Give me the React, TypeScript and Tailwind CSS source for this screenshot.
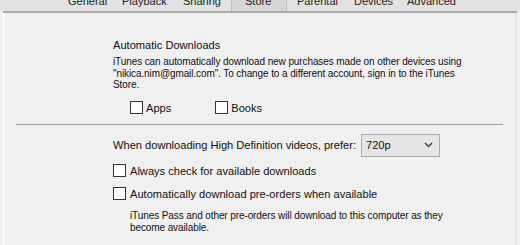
import React from "react";

function Box() {
  return <div className="w-[13px] h-[13px] border border-[#333333] bg-white shrink-0" />;
}

export default function App() {
  const tabs = [
    { t: "General", x: 68 },
    { t: "Playback", x: 122 },
    { t: "Sharing", x: 183 },
    { t: "Store", x: 245 },
    { t: "Parental", x: 297 },
    { t: "Devices", x: 354 },
    { t: "Advanced", x: 407 },
  ];
  return (
    <div
      className="w-[520px] h-[245px] bg-[#f0f0f0] overflow-hidden flex flex-col text-[#111]"
      style={{ fontFamily: '"Liberation Sans", Arial, sans-serif' }}
    >
      <div className="h-[11px] bg-[#e2e2e2] relative shrink-0 overflow-hidden">
        <div className="absolute left-[231px] top-0 w-[56px] h-[11px] bg-[#d6d6d6] border-x border-[#bdbdbd]" />
        {tabs.map((t) => (
          <span
            key={t.t}
            className="absolute top-[-7px] text-[11px] leading-[16px] text-[#222] whitespace-nowrap"
            style={{ left: t.x }}
          >
            {t.t}
          </span>
        ))}
      </div>
      <div className="h-[2px] bg-[#a9a9a9] mx-[3px] shrink-0" />
      <div className="flex-1 mx-[3px] border-l border-white border-r-2 border-r-[#e4e4e4] flex flex-col">
        <div className="pl-[109px] pt-[24px]">
          <div className="text-[11.1px] leading-[16px]">Automatic Downloads</div>
          <div className="text-[10px] tracking-[-0.1px] leading-[11.5px] mt-[3px] whitespace-nowrap">
            iTunes can automatically download new purchases made on other devices using
            <br />
            "nikica.nim@gmail.com". To change to a different account, sign in to the iTunes
            <br />
            Store.
          </div>
          <div className="flex items-center mt-[10px] pl-[17px] text-[11.1px] leading-[14px]">
            <Box />
            <span className="ml-[3px]">Apps</span>
            <div className="ml-[44px] flex items-center">
              <Box />
              <span className="ml-[3px]">Books</span>
            </div>
          </div>
        </div>
        <div className="h-px bg-[#a0a0a0] mx-[12px] mt-[9px]" />
        <div className="pl-[109px] pt-[9px] text-[11.1px] leading-[14px]">
          <div className="flex items-center">
            <span>When downloading High Definition videos, prefer:</span>
            <div className="ml-[5px] w-[79px] h-[23px] border border-[#acacac] bg-[#e5e5e5] flex items-center pl-[4px] pr-[6px] justify-between">
              <span>720p</span>
              <svg width="9" height="6" viewBox="0 0 9 6">
                <path d="M1 1 L4.5 4.5 L8 1" fill="none" stroke="#444" strokeWidth="1.5" />
              </svg>
            </div>
          </div>
          <div className="flex items-center mt-[7px]">
            <Box />
            <span className="ml-[4px]">Always check for available downloads</span>
          </div>
          <div className="flex items-center mt-[9px]">
            <Box />
            <span className="ml-[4px]">Automatically download pre-orders when available</span>
          </div>
          <div className="pl-[17px] mt-[9px] text-[10px] tracking-[-0.1px] leading-[12px] whitespace-nowrap">
            iTunes Pass and other pre-orders will download to this computer as they
            <br />
            become available.
          </div>
        </div>
      </div>
    </div>
  );
}
